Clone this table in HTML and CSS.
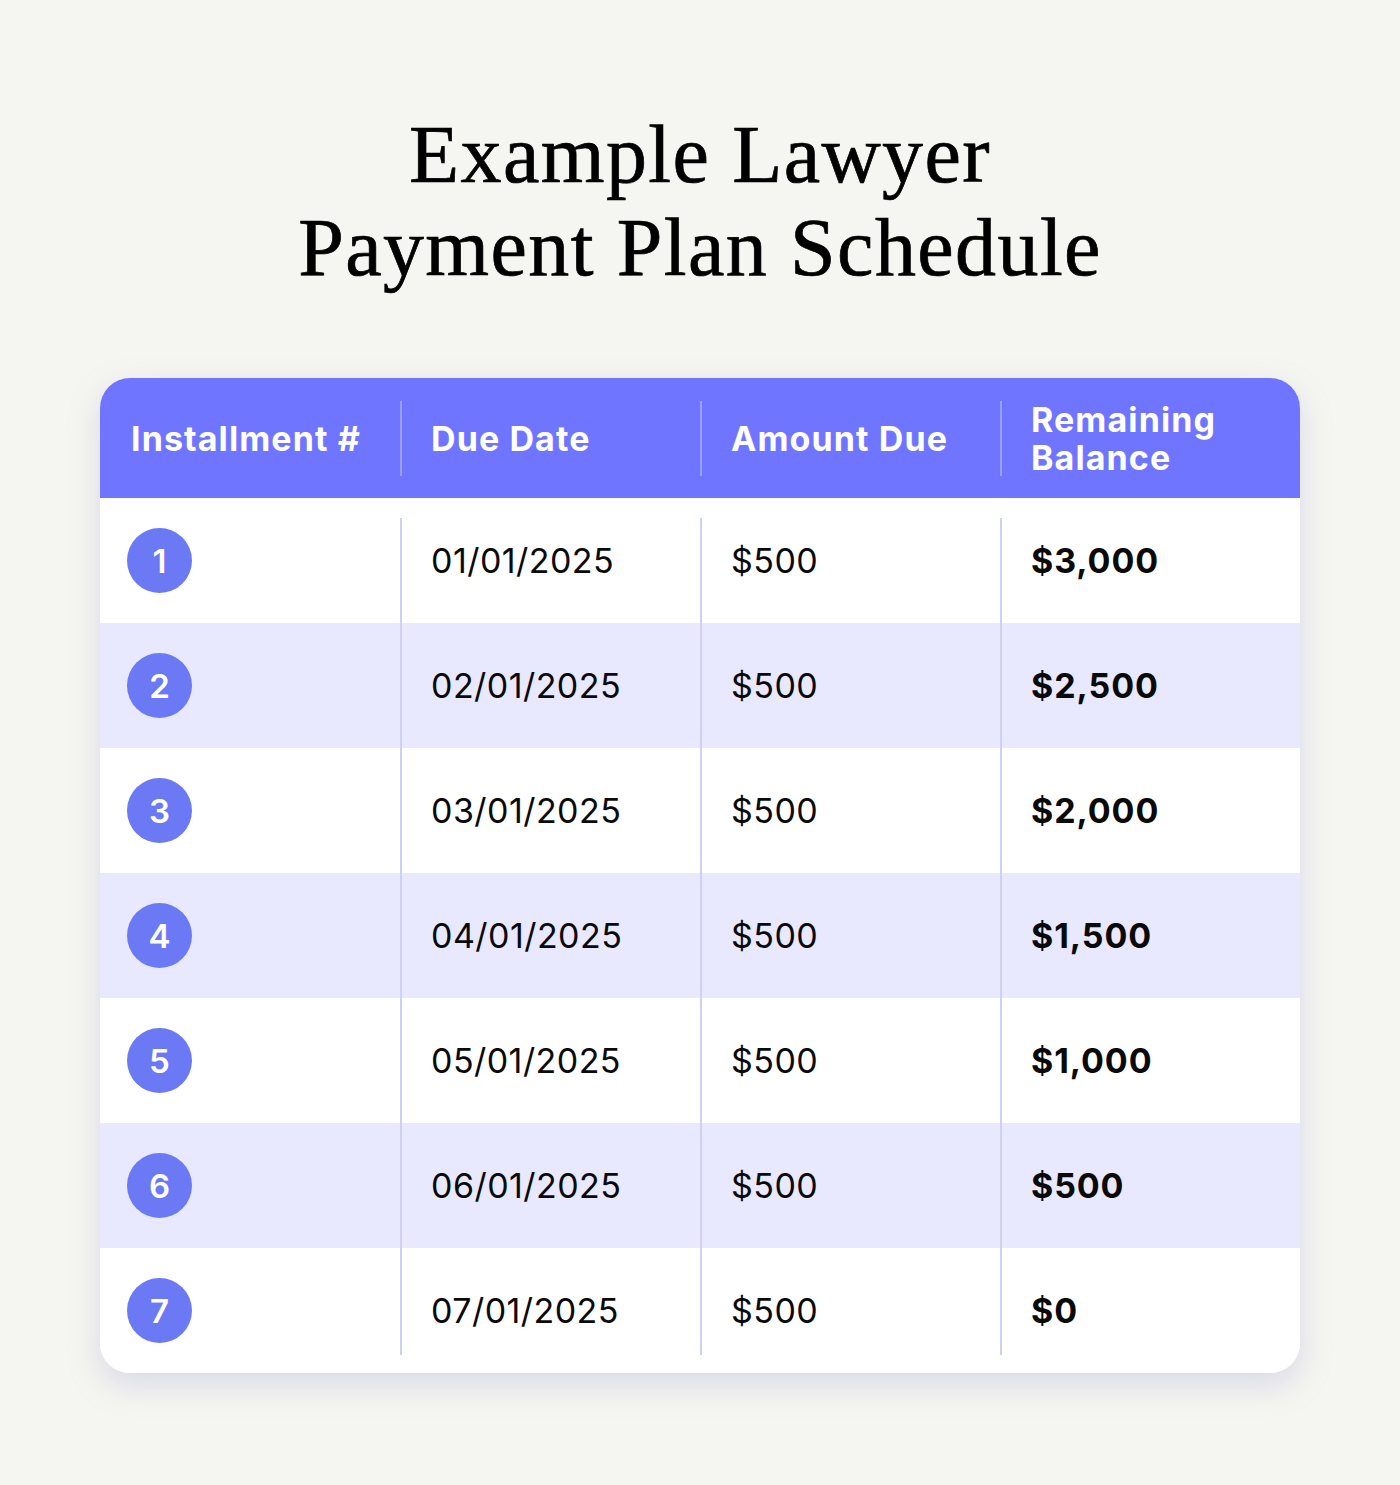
FILE: index.html
```html
<!DOCTYPE html>
<html lang="en">
<head>
<meta charset="utf-8">
<title>Example Lawyer Payment Plan Schedule</title>
<link rel="stylesheet" href="styles.css">
</head>
<body>
<main class="page">
  <h1 class="title">Example Lawyer<br>Payment Plan Schedule</h1>
  <section class="card">
    <div class="head">
      <div class="hcell">Installment #</div>
      <div class="hcell">Due Date</div>
      <div class="hcell">Amount Due</div>
      <div class="hcell">Remaining<br>Balance</div>
    </div>
    <div class="body">
      <div class="row"><div class="cell"><span class="num">1</span></div><div class="cell">01/01/2025</div><div class="cell">$500</div><div class="cell strong">$3,000</div></div>
      <div class="row alt"><div class="cell"><span class="num">2</span></div><div class="cell">02/01/2025</div><div class="cell">$500</div><div class="cell strong">$2,500</div></div>
      <div class="row"><div class="cell"><span class="num">3</span></div><div class="cell">03/01/2025</div><div class="cell">$500</div><div class="cell strong">$2,000</div></div>
      <div class="row alt"><div class="cell"><span class="num">4</span></div><div class="cell">04/01/2025</div><div class="cell">$500</div><div class="cell strong">$1,500</div></div>
      <div class="row"><div class="cell"><span class="num">5</span></div><div class="cell">05/01/2025</div><div class="cell">$500</div><div class="cell strong">$1,000</div></div>
      <div class="row alt"><div class="cell"><span class="num">6</span></div><div class="cell">06/01/2025</div><div class="cell">$500</div><div class="cell strong">$500</div></div>
      <div class="row"><div class="cell"><span class="num">7</span></div><div class="cell">07/01/2025</div><div class="cell">$500</div><div class="cell strong">$0</div></div>
      <div class="lines"><span></span><span></span><span></span><span></span></div>
    </div>
  </section>
</main>
</body>
</html>
```

FILE: styles.css
```css
* { box-sizing: border-box; }
html, body { margin: 0; padding: 0; }
body {
  background: #f5f5f1;
  font-family: Inter, "Liberation Sans", Arial, sans-serif;
  color: #0a0a0a;
}
.page {
  width: 1400px;
  height: 1485px;
  padding-top: 108px;
}
.title {
  margin: 0;
  text-align: center;
  font-family: "Liberation Serif", "Times New Roman", serif;
  font-weight: 400;
  font-size: 82px;
  line-height: 93px;
  letter-spacing: 1.4px;
  color: #000;
  -webkit-text-stroke: 0.7px #000;
}
.card {
  margin: 84px 100px 0;
  width: 1200px;
  background: #fff;
  border-radius: 30px;
  overflow: hidden;
  box-shadow: 0 12px 30px rgba(170, 170, 215, 0.35);
}
.head {
  display: grid;
  grid-template-columns: repeat(4, 1fr);
  height: 120px;
  background: #6f75ff;
  align-items: center;
  padding: 23px 0 22px;
}
.hcell {
  height: 75px;
  display: flex;
  align-items: center;
  padding-left: 29px;
  color: #fff;
  font-weight: 700;
  font-size: 34px;
  line-height: 38px;
  letter-spacing: 1.1px;
  border-left: 2px solid #9aa0ff;
}
.hcell:first-child { border-left: none; padding-left: 31px; }
.body { position: relative; }
.row {
  display: grid;
  grid-template-columns: repeat(4, 1fr);
  height: 125px;
  align-items: center;
  background: #fff;
}
.row.alt { background: #e8e8fe; }
.cell {
  padding-left: 31px;
  font-size: 34px;
  line-height: 40px;
  letter-spacing: 0.45px;
}
.cell:first-child { padding-left: 27px; }
.strong { font-weight: 700; letter-spacing: 0.9px; }
.num {
  display: flex;
  align-items: center;
  justify-content: center;
  width: 65px;
  height: 65px;
  border-radius: 50%;
  background: #6b79f5;
  color: #fff;
  font-weight: 600;
  font-size: 33px;
  letter-spacing: 0;
}
.lines {
  position: absolute;
  left: 0;
  right: 0;
  top: 20px;
  bottom: 18px;
  display: grid;
  grid-template-columns: repeat(4, 1fr);
  pointer-events: none;
}
.lines span { border-left: 2px solid #cfd0f7; }
.lines span:first-child { border-left: none; }
```
